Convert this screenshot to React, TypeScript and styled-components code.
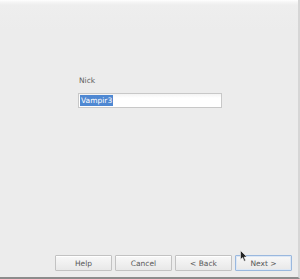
import styled, { createGlobalStyle } from "styled-components";

const GlobalStyle = createGlobalStyle`
    html, body {
        margin: 0;
        padding: 0;
        background: #ececec;
    }
    body {
        font-family: "DejaVu Sans", "Liberation Sans", sans-serif;
    }
`;

export default function App() {
    return (
        <>
            <GlobalStyle />
            <StyledWindow>
                <StyledPage>
                    <StyledField>
                        <StyledLabel>Nick</StyledLabel>
                        <StyledInput>
                            <StyledSelection>Vampir3</StyledSelection>
                        </StyledInput>
                    </StyledField>
                </StyledPage>
                <StyledFooter>
                    <StyledButton>Help</StyledButton>
                    <StyledButton>Cancel</StyledButton>
                    <StyledButton>&lt; Back</StyledButton>
                    <StyledButton $focused>Next &gt;</StyledButton>
                </StyledFooter>
                <StyledCursor width="8" height="12" viewBox="0 0 8 12">
                    <path d="M0.5 0.5 L0.5 9.5 L2.6 7.6 L4.2 11.2 L5.6 10.6 L4.1 7.1 L7 7 Z" fill="#222" stroke="#f4f4f4" strokeWidth="0.6" />
                </StyledCursor>
            </StyledWindow>
        </>
    )
};

const StyledWindow = styled.div`
    position: relative;
    box-sizing: border-box;
    width: 300px;
    height: 279px;
    display: flex;
    flex-direction: column;
    background: linear-gradient(#ffffff 0px, #f6f6f6 2px, #eeeeee 5px, #ececec 30px);
    border-right: 2px solid #d6d6d6;
    border-bottom: 2px solid #8c8c8c;
    overflow: hidden;
`;

const StyledPage = styled.div`
    flex-grow: 1;
    padding: 75px 0 0 78px;
`;

const StyledField = styled.div`
    display: flex;
    flex-direction: column;
    gap: 7px;
`;

const StyledLabel = styled.div`
    font-size: 7.5px;
    line-height: 11px;
    color: #606060;
    padding-left: 1px;
`;

const StyledInput = styled.div`
    box-sizing: border-box;
    width: 144px;
    height: 15px;
    padding: 1px 1px;
    border: 1px solid #c8c8c8;
    background: linear-gradient(#f4f4f4, #ffffff 4px);
    display: flex;
    align-items: center;
`;

const StyledSelection = styled.span`
    background: #4f88d2;
    color: #ffffff;
    font-size: 7.5px;
    line-height: 11px;
    padding: 0 1px;
`;

const StyledFooter = styled.div`
    display: flex;
    justify-content: flex-end;
    gap: 3px;
    padding: 0 6px 6px 0;
`;

const StyledButton = styled.div<{ $focused?: boolean }>`
    box-sizing: border-box;
    width: 57px;
    height: 16px;
    display: flex;
    align-items: center;
    justify-content: center;
    font-size: 7.5px;
    color: #585858;
    border: 1px solid ${p => p.$focused ? "#9ab8de" : "#c2c2c2"};
    border-radius: 1px;
    background: linear-gradient(#f8f8f8, #e8e8e8);
    box-shadow: ${p => p.$focused ? "inset 0 0 0 1px #dce7f5" : "inset 0 1px 0 #ffffff"};
`;

const StyledCursor = styled.svg`
    position: absolute;
    left: 240px;
    top: 250px;
`;
